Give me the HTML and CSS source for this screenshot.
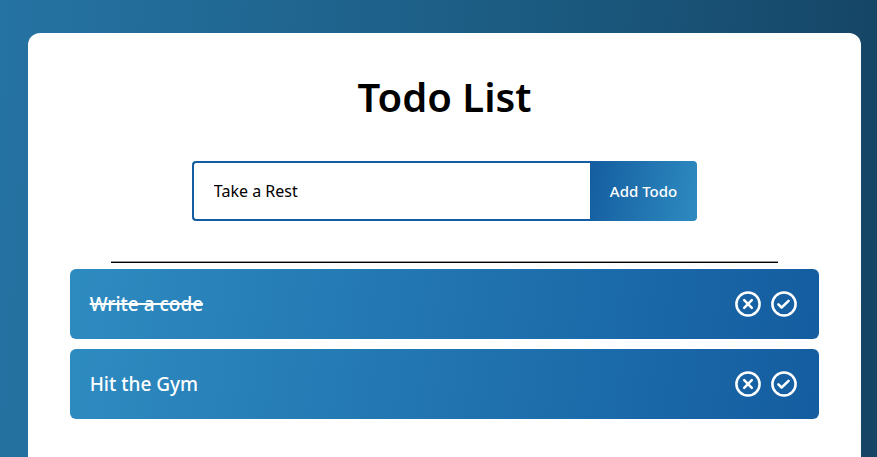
FILE: index.html
```html
<!DOCTYPE html>
<html lang="en">
<head>
<meta charset="utf-8">
<meta name="viewport" content="width=device-width, initial-scale=1">
<title>Todo List</title>
<link rel="stylesheet" href="styles.css">
</head>
<body>
<main class="card">
  <h1 class="title">Todo List</h1>
  <form class="todo-form">
    <input class="todo-input" type="text" value="Take a Rest" aria-label="New todo">
    <button class="todo-button" type="button">Add Todo</button>
  </form>
  <hr class="divider">
  <ul class="todo-list">
    <li class="todo done">
      <span class="todo-text">Write a code</span>
      <span class="actions">
        <button class="icon-button" type="button" aria-label="Delete"><svg class="icon" viewBox="0 0 30 30"><circle cx="15" cy="15" r="11.6"/><path d="M11.2 11.2l7.6 7.6M18.8 11.2l-7.6 7.6"/></svg></button>
        <button class="icon-button" type="button" aria-label="Complete"><svg class="icon" viewBox="0 0 30 30"><circle cx="15" cy="15" r="11.6"/><path d="M9.4 15.3l3.2 3.2 7-6.6"/></svg></button>
      </span>
    </li>
    <li class="todo">
      <span class="todo-text">Hit the Gym</span>
      <span class="actions">
        <button class="icon-button" type="button" aria-label="Delete"><svg class="icon" viewBox="0 0 30 30"><circle cx="15" cy="15" r="11.6"/><path d="M11.2 11.2l7.6 7.6M18.8 11.2l-7.6 7.6"/></svg></button>
        <button class="icon-button" type="button" aria-label="Complete"><svg class="icon" viewBox="0 0 30 30"><circle cx="15" cy="15" r="11.6"/><path d="M9.4 15.3l3.2 3.2 7-6.6"/></svg></button>
      </span>
    </li>
  </ul>
</main>
</body>
</html>
```
FILE: styles.css
```css
* { box-sizing: border-box; }

body {
  margin: 0;
  min-height: 100vh;
  padding: 33px 16px 0 28px;
  background: linear-gradient(94deg, #2573a3, #1b5a80 60%, #154464);
  font-family: "Trebuchet MS", "Noto Sans", sans-serif;
}

.card {
  min-height: calc(100vh - 33px);
  padding: 40px 0;
  display: flex;
  flex-direction: column;
  align-items: center;
  background: #fff;
  border-radius: 12px 12px 0 0;
}

.title {
  margin: 0 0 40px;
  font-size: 40px;
  line-height: 48px;
  font-weight: 600;
}

.todo-form {
  display: flex;
  height: 60px;
  margin-bottom: 40px;
}

.todo-input {
  width: 398px;
  padding: 0 20px;
  border: 2px solid #145da0;
  border-right: 0;
  border-radius: 4px 0 0 4px;
  background: #fff;
  color: #000;
  font-family: inherit;
  font-size: 16px;
  outline: none;
}

.todo-button {
  padding: 0 20px;
  border: 0;
  border-radius: 0 4px 4px 0;
  background: linear-gradient(100deg, #145da0, #2e8bc0);
  color: #fff;
  font-family: inherit;
  font-size: 15px;
  font-weight: 500;
}

.divider {
  width: 80%;
  height: 2px;
  margin: 0 0 6px;
  border: 0;
  border-top: 1px solid #999;
  background: #000;
}

.todo-list {
  width: 90%;
  margin: 0;
  padding: 0;
  list-style: none;
  display: flex;
  flex-direction: column;
  gap: 10px;
}

.todo {
  display: flex;
  align-items: center;
  justify-content: space-between;
  height: 70px;
  padding: 0 20px;
  border-radius: 6px;
  background: linear-gradient(100deg, #2e8bc0, #145da0);
  color: #fff;
  font-size: 19px;
  font-weight: 500;
}

.done .todo-text {
  text-decoration: line-through;
  text-decoration-thickness: 2px;
}

.actions {
  display: flex;
  gap: 6px;
}

.icon-button {
  display: flex;
  padding: 0;
  border: 0;
  background: none;
  color: inherit;
  cursor: pointer;
}

.icon {
  width: 30px;
  height: 30px;
  fill: none;
  stroke: currentColor;
  stroke-width: 2.5;
  stroke-linecap: round;
  stroke-linejoin: round;
}
```
